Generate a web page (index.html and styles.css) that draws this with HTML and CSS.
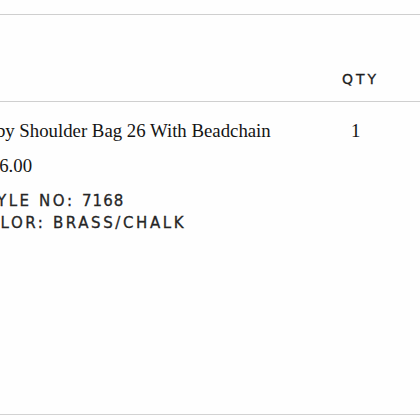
FILE: index.html
```html
<!DOCTYPE html>
<html lang="en">
<head>
<meta charset="utf-8">
<title>Cart</title>
<link rel="stylesheet" href="styles.css">
</head>
<body>
<div class="cart">
  <div class="cart-head">
    <div class="col-item"></div>
    <div class="col-qty head-label">QTY</div>
  </div>
  <div class="cart-row">
    <div class="col-item">
      <div class="name">Tabby Shoulder Bag 26 With Beadchain</div>
      <div class="price">$396.00</div>
      <div class="meta">
        <div class="meta-line">STYLE NO: <span class="num">7168</span></div>
        <div class="meta-line">COLOR: BRASS/CHALK</div>
      </div>
    </div>
    <div class="col-qty qty-val">1</div>
  </div>
</div>
</body>
</html>
```

FILE: styles.css
```css
html, body {
  margin: 0;
  padding: 0;
  background: #fefefe;
  overflow: hidden;
}

.cart {
  margin-top: 14px;
  margin-left: -27px;
  border-top: 1px solid #cfcfcf;
}

.cart-head {
  display: grid;
  grid-template-columns: 369px 1fr;
  height: 86px;
  align-items: end;
  border-bottom: 1px solid #cfcfcf;
}

.head-label {
  font-family: "DejaVu Sans", sans-serif;
  font-size: 14px;
  line-height: 20px;
  letter-spacing: 3px;
  color: #1e1e1e;
  -webkit-text-stroke: 0.3px #1e1e1e;
  padding-bottom: 12px;
}

.cart-row {
  display: grid;
  grid-template-columns: 369px 1fr;
  height: 313px;
  box-sizing: border-box;
  padding-top: 17px;
  border-bottom: 1px solid #d2d2d2;
}

.name {
  margin-left: -5px;
  font-family: "Liberation Serif", serif;
  font-size: 18.8px;
  line-height: 24px;
  color: #141414;
  white-space: nowrap;
}

.price {
  margin-top: 11px;
  margin-left: -2px;
  font-family: "Liberation Serif", serif;
  font-size: 18.8px;
  line-height: 24px;
  color: #141414;
}

.meta {
  margin-top: 12px;
}

.meta-line {
  font-family: "DejaVu Sans", sans-serif;
  font-size: 15px;
  line-height: 22px;
  letter-spacing: 2.6px;
  color: #262626;
  -webkit-text-stroke: 0.3px #262626;
  white-space: nowrap;
}

.num {
  letter-spacing: 1px;
}

.qty-val {
  font-family: "Liberation Serif", serif;
  font-size: 18.8px;
  line-height: 24px;
  color: #141414;
  padding-left: 9px;
}
```
